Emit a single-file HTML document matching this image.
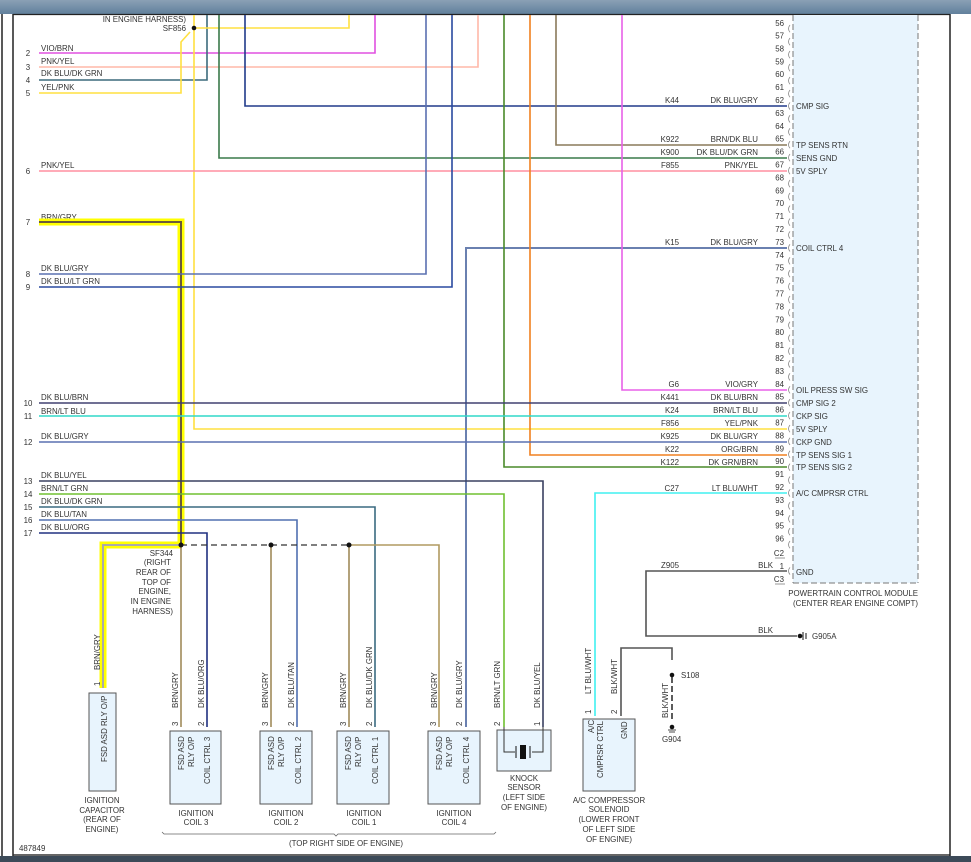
<!DOCTYPE html>
<html><head><meta charset="utf-8"><style>
html,body{margin:0;padding:0;background:#fff;}
svg{display:block;font-family:"Liberation Sans",Arial,sans-serif;}
text{font-size:7.9px;fill:#333;}
</style></head><body>
<svg width="971" height="862" viewBox="0 0 971 862" xmlns="http://www.w3.org/2000/svg">
<defs><linearGradient id="tb" x1="0" y1="0" x2="0" y2="1"><stop offset="0" stop-color="#8aa0b5"/><stop offset="1" stop-color="#61809c"/></linearGradient></defs>
<rect x="0" y="0" width="971" height="14" fill="url(#tb)"/>
<rect x="0" y="856" width="971" height="6" fill="#3c4a58"/>
<line x1="2" y1="14" x2="2" y2="856" stroke="#222" stroke-width="1.5"/>
<line x1="13" y1="14" x2="13" y2="856" stroke="#222" stroke-width="1.5"/>
<line x1="13" y1="14.5" x2="950" y2="14.5" stroke="#222" stroke-width="1.2"/>
<line x1="13" y1="855" x2="950" y2="855" stroke="#333" stroke-width="1.5"/>
<line x1="950" y1="14" x2="950" y2="856" stroke="#222" stroke-width="1.5"/>

<!-- PCM box -->
<rect x="793" y="15" width="125" height="568" fill="#e8f4fd"/>
<line x1="793" y1="15" x2="793" y2="583" stroke="#777" stroke-dasharray="6,3" stroke-width="1"/>
<line x1="918" y1="15" x2="918" y2="583" stroke="#777" stroke-dasharray="6,3" stroke-width="1"/>
<line x1="793" y1="583" x2="918" y2="583" stroke="#777" stroke-dasharray="6,3" stroke-width="1"/>
<text x="918" y="596" text-anchor="end">POWERTRAIN CONTROL MODULE</text>
<text x="918" y="606" text-anchor="end">(CENTER REAR ENGINE COMPT)</text>

<!-- pin numbers -->
<g text-anchor="end">
<text x="784" y="26">56</text><text x="784" y="38.5">57</text><text x="784" y="51.4">58</text><text x="784" y="64.3">59</text><text x="784" y="77.2">60</text><text x="784" y="90.1">61</text><text x="784" y="103">62</text><text x="784" y="115.9">63</text><text x="784" y="128.8">64</text><text x="784" y="141.7">65</text><text x="784" y="154.6">66</text><text x="784" y="167.5">67</text><text x="784" y="180.4">68</text><text x="784" y="193.3">69</text><text x="784" y="206.2">70</text><text x="784" y="219.1">71</text><text x="784" y="232">72</text><text x="784" y="244.9">73</text><text x="784" y="257.8">74</text><text x="784" y="270.7">75</text><text x="784" y="283.6">76</text><text x="784" y="296.5">77</text><text x="784" y="309.4">78</text><text x="784" y="322.3">79</text><text x="784" y="335.2">80</text><text x="784" y="348.1">81</text><text x="784" y="361">82</text><text x="784" y="373.9">83</text><text x="784" y="386.8">84</text><text x="784" y="399.7">85</text><text x="784" y="412.6">86</text><text x="784" y="425.5">87</text><text x="784" y="438.4">88</text><text x="784" y="451.3">89</text><text x="784" y="464.2">90</text><text x="784" y="477.1">91</text><text x="784" y="490">92</text><text x="784" y="502.9">93</text><text x="784" y="515.8">94</text><text x="784" y="528.7">95</text><text x="784" y="541.6">96</text>
<text x="784" y="556">C2</text><text x="784" y="569">1</text><text x="784" y="582">C3</text>
</g>
<line x1="775" y1="558" x2="785" y2="558" stroke="#555" stroke-width="0.6"/>
<line x1="775" y1="584" x2="785" y2="584" stroke="#555" stroke-width="0.6"/>
<g fill="none" stroke="#888" stroke-width="0.8">
<path d="M790 25 q-3 3.6 0 7.2M790 38 q-3 3.6 0 7.2M790 51 q-3 3.6 0 7.2M790 64 q-3 3.6 0 7.2M790 77 q-3 3.6 0 7.2M790 90 q-3 3.6 0 7.2M790 102.4 q-3 3.6 0 7.2M790 115.3 q-3 3.6 0 7.2M790 128.2 q-3 3.6 0 7.2M790 141.1 q-3 3.6 0 7.2M790 154 q-3 3.6 0 7.2M790 167 q-3 3.6 0 7.2M790 180 q-3 3.6 0 7.2M790 193 q-3 3.6 0 7.2M790 205.6 q-3 3.6 0 7.2M790 218.5 q-3 3.6 0 7.2M790 231.4 q-3 3.6 0 7.2M790 244.3 q-3 3.6 0 7.2M790 257.2 q-3 3.6 0 7.2M790 270.1 q-3 3.6 0 7.2M790 283 q-3 3.6 0 7.2M790 296 q-3 3.6 0 7.2M790 309 q-3 3.6 0 7.2M790 321.7 q-3 3.6 0 7.2M790 334.6 q-3 3.6 0 7.2M790 347.5 q-3 3.6 0 7.2M790 360.4 q-3 3.6 0 7.2M790 373.3 q-3 3.6 0 7.2M790 386.2 q-3 3.6 0 7.2M790 399.1 q-3 3.6 0 7.2M790 412 q-3 3.6 0 7.2M790 425 q-3 3.6 0 7.2M790 437.8 q-3 3.6 0 7.2M790 450.7 q-3 3.6 0 7.2M790 463.6 q-3 3.6 0 7.2M790 476.5 q-3 3.6 0 7.2M790 489.4 q-3 3.6 0 7.2M790 502.3 q-3 3.6 0 7.2M790 515.2 q-3 3.6 0 7.2M790 528.1 q-3 3.6 0 7.2M790 541 q-3 3.6 0 7.2M790 567.4 q-3 3.6 0 7.2"/>
</g>
<g>
<text x="796" y="109">CMP SIG</text>
<text x="796" y="148">TP SENS RTN</text>
<text x="796" y="161">SENS GND</text>
<text x="796" y="174">5V SPLY</text>
<text x="796" y="251">COIL CTRL 4</text>
<text x="796" y="393">OIL PRESS SW SIG</text>
<text x="796" y="406">CMP SIG 2</text>
<text x="796" y="419">CKP SIG</text>
<text x="796" y="432">5V SPLY</text>
<text x="796" y="445">CKP GND</text>
<text x="796" y="458">TP SENS SIG 1</text>
<text x="796" y="470">TP SENS SIG 2</text>
<text x="796" y="496">A/C CMPRSR CTRL</text>
<text x="796" y="575">GND</text>
</g>
<g text-anchor="end">
<text x="679" y="103">K44</text><text x="758" y="103">DK BLU/GRY</text>
<text x="679" y="142">K922</text><text x="758" y="142">BRN/DK BLU</text>
<text x="679" y="155">K900</text><text x="758" y="155">DK BLU/DK GRN</text>
<text x="679" y="168">F855</text><text x="758" y="168">PNK/YEL</text>
<text x="679" y="245">K15</text><text x="758" y="245">DK BLU/GRY</text>
<text x="679" y="387">G6</text><text x="758" y="387">VIO/GRY</text>
<text x="679" y="400">K441</text><text x="758" y="400">DK BLU/BRN</text>
<text x="679" y="413">K24</text><text x="758" y="413">BRN/LT BLU</text>
<text x="679" y="426">F856</text><text x="758" y="426">YEL/PNK</text>
<text x="679" y="439">K925</text><text x="758" y="439">DK BLU/GRY</text>
<text x="679" y="452">K22</text><text x="758" y="452">ORG/BRN</text>
<text x="679" y="465">K122</text><text x="758" y="465">DK GRN/BRN</text>
<text x="679" y="491">C27</text><text x="758" y="491">LT BLU/WHT</text>
<text x="679" y="568">Z905</text><text x="773" y="568">BLK</text>
<text x="773" y="633">BLK</text>
</g>

<g text-anchor="middle">
<text x="28" y="56">2</text><text x="28" y="70">3</text><text x="28" y="83">4</text><text x="28" y="96">5</text>
<text x="28" y="174">6</text><text x="28" y="225">7</text><text x="28" y="277">8</text><text x="28" y="290">9</text>
<text x="28" y="406">10</text><text x="28" y="419">11</text><text x="28" y="445">12</text>
<text x="28" y="484">13</text><text x="28" y="497">14</text><text x="28" y="510">15</text><text x="28" y="523">16</text><text x="28" y="536">17</text>
</g>
<g>
<text x="41" y="51">VIO/BRN</text><text x="41" y="64">PNK/YEL</text><text x="41" y="76">DK BLU/DK GRN</text><text x="41" y="90">YEL/PNK</text>
<text x="41" y="168">PNK/YEL</text><text x="41" y="220">BRN/GRY</text><text x="41" y="271">DK BLU/GRY</text><text x="41" y="284">DK BLU/LT GRN</text>
<text x="41" y="400">DK BLU/BRN</text><text x="41" y="414">BRN/LT BLU</text><text x="41" y="439">DK BLU/GRY</text>
<text x="41" y="478">DK BLU/YEL</text><text x="41" y="491">BRN/LT GRN</text><text x="41" y="504">DK BLU/DK GRN</text><text x="41" y="517">DK BLU/TAN</text><text x="41" y="530">DK BLU/ORG</text>
</g>
<text x="186" y="22" text-anchor="end">IN ENGINE HARNESS)</text>
<text x="186" y="31" text-anchor="end">SF856</text>

<path d="M39 222 H181 V545" fill="none" stroke="#ffff00" stroke-width="7"/>
<path d="M181 545 H103 V688" fill="none" stroke="#ffff00" stroke-width="7"/>
<path d="M39 222 H181 V545" fill="none" stroke="#6a5a3a" stroke-width="2"/>
<path d="M181 545 H103 V688" fill="none" stroke="#aaa" stroke-width="2"/>

<g fill="none" stroke-width="1.6">
<path d="M39 53 H375 V15" stroke="#e050e0"/>
<path d="M39 67 H478 V15" stroke="#ffb8a8"/>
<path d="M39 80 H207 V15" stroke="#3c6a7c"/>
<path d="M39 93 H181 V42 L190 32" stroke="#ffe040"/>
<path d="M194 15 V429 H787" stroke="#ffe040"/>
<path d="M194 28 H349 V15" stroke="#ffe040"/>
<path d="M245 15 V106 H787" stroke="#203a8a"/>
<path d="M219 15 V158 H787" stroke="#3a7a4a"/>
<path d="M556 15 V145 H787" stroke="#8a7a5a"/>
<path d="M39 171 H787" stroke="#ff8fa0"/>
<path d="M39 274 H426 V15" stroke="#5a70b0"/>
<path d="M39 287 H452 V15" stroke="#2a4aa0"/>
<path d="M787 248 H466 V727" stroke="#6a80b0" stroke-width="2"/>
<path d="M504 15 V467 H787" stroke="#4a8a2a"/>
<path d="M530 15 V455 H787" stroke="#f08020"/>
<path d="M622 15 V390 H787" stroke="#e860e8"/>
<path d="M39 403 H787" stroke="#404070"/>
<path d="M39 416 H787" stroke="#30d8c8"/>
<path d="M39 442 H787" stroke="#5a70b0"/>
<path d="M39 481 H543 V727" stroke="#3a4060"/>
<path d="M39 494 H504 V727" stroke="#70c030"/>
<path d="M39 507 H375 V727" stroke="#3a6a80"/>
<path d="M39 520 H297 V727" stroke="#5070b0"/>
<path d="M39 533 H207 V727" stroke="#203080"/>
<path d="M181 545 V727" stroke="#a08a5a"/>
<path d="M271 545 V727" stroke="#a08a5a"/>
<path d="M349 545 V727" stroke="#a08a5a"/>
<path d="M349 545 H439 V727" stroke="#b09a60"/>
<path d="M787 493 H595 V716" stroke="#40f0f0"/>
<path d="M621 716 V648 H672 V660" stroke="#555"/>
<path d="M787 571 H646 V636 H797" stroke="#555"/>
</g>
<path d="M181 545 H349" stroke="#333" stroke-width="1.2" stroke-dasharray="6,4"/>
<path d="M672 677 V722" stroke="#333" stroke-width="1.6" stroke-dasharray="6,3"/>
<g fill="#111">
<circle cx="194" cy="28" r="2.3"/><circle cx="181" cy="545" r="2.5"/><circle cx="271" cy="545" r="2.5"/><circle cx="349" cy="545" r="2.5"/>
<circle cx="672" cy="675" r="2.3"/><circle cx="672" cy="727" r="2.3"/><circle cx="800" cy="636" r="2.3"/>
</g>
<path d="M803 632 V640 M806 633 V639" stroke="#111" stroke-width="1"/>
<path d="M668 730 H676 M669 732 H675" stroke="#111" stroke-width="0.8"/>
<text x="812" y="639">G905A</text>
<text x="681" y="678">S108</text>
<text x="662" y="742">G904</text>
<text transform="translate(668,718) rotate(-90)">BLK/WHT</text>

<g text-anchor="end">
<text x="173" y="556">SF344</text><text x="171" y="565">(RIGHT</text><text x="171" y="575">REAR OF</text><text x="171" y="585">TOP OF</text><text x="171" y="594">ENGINE,</text><text x="171" y="604">IN ENGINE</text><text x="173" y="614">HARNESS)</text>
</g>

<g fill="#e8f4fd" stroke="#555" stroke-width="1">
<rect x="89" y="693" width="27" height="98"/>
<rect x="170" y="731" width="51" height="73"/>
<rect x="260" y="731" width="52" height="73"/>
<rect x="337" y="731" width="52" height="73"/>
<rect x="428" y="731" width="52" height="73"/>
<rect x="497" y="730" width="54" height="41"/>
<rect x="583" y="719" width="52" height="72"/>
</g>
<path d="M504 727 V752 H515 M543 727 V752 H532" fill="none" stroke="#333" stroke-width="1"/>
<rect x="520" y="745" width="6" height="14" fill="#111"/>
<path d="M516 746 V758 M530 746 V758" stroke="#111" stroke-width="1"/>

<g>
<text transform="translate(100,670) rotate(-90)">BRN/GRY</text>
<text transform="translate(178,708) rotate(-90)">BRN/GRY</text>
<text transform="translate(204,708) rotate(-90)">DK BLU/ORG</text>
<text transform="translate(268,708) rotate(-90)">BRN/GRY</text>
<text transform="translate(294,708) rotate(-90)">DK BLU/TAN</text>
<text transform="translate(346,708) rotate(-90)">BRN/GRY</text>
<text transform="translate(372,708) rotate(-90)">DK BLU/DK GRN</text>
<text transform="translate(437,708) rotate(-90)">BRN/GRY</text>
<text transform="translate(462,708) rotate(-90)">DK BLU/GRY</text>
<text transform="translate(500,708) rotate(-90)">BRN/LT GRN</text>
<text transform="translate(540,708) rotate(-90)">DK BLU/YEL</text>
<text transform="translate(591,694) rotate(-90)">LT BLU/WHT</text>
<text transform="translate(617,694) rotate(-90)">BLK/WHT</text>
<text transform="translate(100,686) rotate(-90)">1</text>
<text transform="translate(178,726) rotate(-90)">3</text><text transform="translate(204,726) rotate(-90)">2</text>
<text transform="translate(268,726) rotate(-90)">3</text><text transform="translate(294,726) rotate(-90)">2</text>
<text transform="translate(346,726) rotate(-90)">3</text><text transform="translate(372,726) rotate(-90)">2</text>
<text transform="translate(436,726) rotate(-90)">3</text><text transform="translate(462,726) rotate(-90)">2</text>
<text transform="translate(500,726) rotate(-90)">2</text><text transform="translate(540,726) rotate(-90)">1</text>
<text transform="translate(591,714) rotate(-90)">1</text><text transform="translate(617,714) rotate(-90)">2</text>
<text transform="translate(107,762) rotate(-90)">FSD ASD RLY O/P</text>
<text transform="translate(184,770) rotate(-90)">FSD ASD</text><text transform="translate(194,767) rotate(-90)">RLY O/P</text><text transform="translate(210,784) rotate(-90)">COIL CTRL 3</text>
<text transform="translate(274,770) rotate(-90)">FSD ASD</text><text transform="translate(284,767) rotate(-90)">RLY O/P</text><text transform="translate(301,784) rotate(-90)">COIL CTRL 2</text>
<text transform="translate(351,770) rotate(-90)">FSD ASD</text><text transform="translate(361,767) rotate(-90)">RLY O/P</text><text transform="translate(378,784) rotate(-90)">COIL CTRL 1</text>
<text transform="translate(442,770) rotate(-90)">FSD ASD</text><text transform="translate(452,767) rotate(-90)">RLY O/P</text><text transform="translate(469,784) rotate(-90)">COIL CTRL 4</text>
<text transform="translate(594,733) rotate(-90)">A/C</text><text transform="translate(603,778) rotate(-90)">CMPRSR CTRL</text>
<text transform="translate(627,739) rotate(-90)">GND</text>
</g>
<g text-anchor="middle">
<text x="102" y="803">IGNITION</text><text x="102" y="813">CAPACITOR</text><text x="102" y="822">(REAR OF</text><text x="102" y="832">ENGINE)</text>
<text x="196" y="816">IGNITION</text><text x="196" y="825">COIL 3</text>
<text x="286" y="816">IGNITION</text><text x="286" y="825">COIL 2</text>
<text x="364" y="816">IGNITION</text><text x="364" y="825">COIL 1</text>
<text x="454" y="816">IGNITION</text><text x="454" y="825">COIL 4</text>
<text x="524" y="781">KNOCK</text><text x="524" y="790">SENSOR</text><text x="524" y="800">(LEFT SIDE</text><text x="524" y="810">OF ENGINE)</text>
<text x="609" y="803">A/C COMPRESSOR</text><text x="609" y="812">SOLENOID</text><text x="609" y="822">(LOWER FRONT</text><text x="609" y="832">OF LEFT SIDE</text><text x="609" y="842">OF ENGINE)</text>
<text x="346" y="846">(TOP RIGHT SIDE OF ENGINE)</text>
</g>
<path d="M162 832 L164 834 H334 L336 836 L338 834 H494 L496 832" fill="none" stroke="#666" stroke-width="0.8"/>
<text x="19" y="851">487849</text>
</svg>
</body></html>
